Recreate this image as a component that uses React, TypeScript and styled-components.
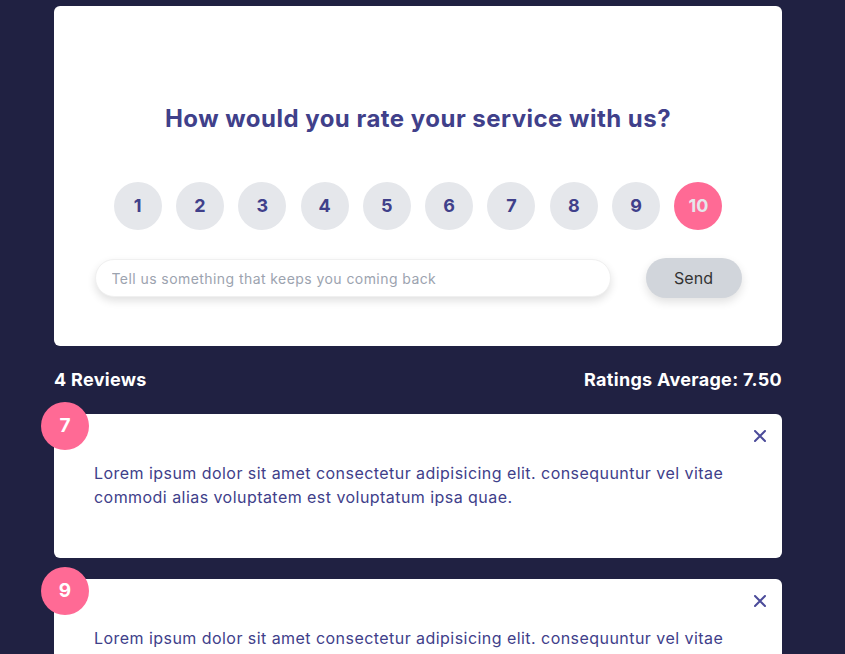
import styled, { createGlobalStyle } from "styled-components";
import { useState } from "react";

const GlobalStyle = createGlobalStyle`
  * {
    box-sizing: border-box;
    margin: 0;
    padding: 0;
  }
  body {
    background-color: #202142;
    font-family: "Inter", "Noto Sans", sans-serif;
    line-height: 1.6;
    padding-right: 9px;
  }
`;

const Container = styled.div`
  max-width: 768px;
  margin: 0 auto;
  padding: 6px 20px 40px;
`;

const Card = styled.div`
  position: relative;
  background-color: #ffffff;
  color: #40408a;
  border-radius: 6px;
  padding: 47px 40px 49px;
`;

const FormCard = styled(Card)`
  height: 340px;
  padding: 92px 40px 0;
`;

const Title = styled.h2`
  font-size: 24px;
  font-weight: 700;
  text-align: center;
  color: #40408a;
  line-height: 42px;
  letter-spacing: 0.48px;
`;

const RatingList = styled.ul`
  list-style: none;
  display: flex;
  justify-content: center;
  gap: 14.3px;
  margin: 42px 0 28px;
`;

const RatingItem = styled.li<{ $selected: boolean }>`
  width: 48px;
  height: 48px;
  border-radius: 50%;
  display: flex;
  align-items: center;
  justify-content: center;
  font-size: 18px;
  font-weight: 700;
  cursor: pointer;
  background-color: ${(props) => (props.$selected ? "#ff6a95" : "#e5e7eb")};
  color: ${(props) => (props.$selected ? "#e5e7eb" : "#40408a")};
`;

const InputRow = styled.form`
  display: flex;
  justify-content: center;
  align-items: center;
  gap: 35px;
`;

const Input = styled.input`
  width: 516px;
  height: 38px;
  border: 1px solid #f0f0f0;
  border-radius: 999px;
  padding: 0 16px;
  font-family: inherit;
  font-size: 14px;
  letter-spacing: 0.43px;
  color: #40408a;
  box-shadow: 0 4px 8px rgba(0, 0, 0, 0.12);
  outline: none;
  &::placeholder {
    color: #9ca3af;
  }
`;

const SendButton = styled.button`
  width: 96px;
  height: 40px;
  border: none;
  border-radius: 999px;
  background-color: #d1d5db;
  color: #333333;
  font-family: inherit;
  font-size: 16px;
  box-shadow: 0 4px 10px rgba(0, 0, 0, 0.12);
  cursor: pointer;
`;

const Stats = styled.div`
  display: flex;
  justify-content: space-between;
  align-items: center;
  color: #ffffff;
  font-weight: 700;
  font-size: 18px;
  letter-spacing: 0.3px;
  height: 68px;
`;

const ReviewList = styled.div`
  display: flex;
  flex-direction: column;
  gap: 21px;
`;

const NumDisplay = styled.div`
  position: absolute;
  top: -12px;
  left: -13px;
  width: 48px;
  height: 48px;
  border-radius: 50%;
  background-color: #ff6a95;
  color: #ffffff;
  display: flex;
  align-items: center;
  justify-content: center;
  font-size: 19px;
  font-weight: 700;
`;

const CloseButton = styled.button`
  position: absolute;
  top: 16px;
  right: 16px;
  width: 12px;
  height: 12px;
  background: none;
  border: none;
  cursor: pointer;
  display: flex;
`;

const ReviewText = styled.p`
  font-size: 16px;
  line-height: 24px;
  letter-spacing: 0.45px;
  color: #40408a;
`;

const lorem =
  "Lorem ipsum dolor sit amet consectetur adipisicing elit. consequuntur vel vitae commodi alias voluptatem est voluptatum ipsa quae.";

const reviews = [
  { id: 1, rating: 7, text: lorem },
  { id: 2, rating: 9, text: lorem },
  { id: 3, rating: 4, text: lorem },
  { id: 4, rating: 10, text: lorem },
];

function App() {
  const [selected, setSelected] = useState(10);
  const [items, setItems] = useState(reviews);

  const average =
    items.reduce((acc, cur) => acc + cur.rating, 0) / (items.length || 1);

  return (
    <>
      <GlobalStyle />
      <Container>
        <FormCard>
          <Title>How would you rate your service with us?</Title>
          <RatingList>
            {[1, 2, 3, 4, 5, 6, 7, 8, 9, 10].map((n) => (
              <RatingItem
                key={n}
                $selected={selected === n}
                onClick={() => setSelected(n)}
              >
                {n}
              </RatingItem>
            ))}
          </RatingList>
          <InputRow onSubmit={(e) => e.preventDefault()}>
            <Input placeholder="Tell us something that keeps you coming back" />
            <SendButton type="submit">Send</SendButton>
          </InputRow>
        </FormCard>
        <Stats>
          <span>{items.length} Reviews</span>
          <span>Ratings Average: {average.toFixed(2)}</span>
        </Stats>
        <ReviewList>
          {items.map((item) => (
            <Card key={item.id}>
              <NumDisplay>{item.rating}</NumDisplay>
              <CloseButton
                onClick={() => setItems(items.filter((i) => i.id !== item.id))}
              >
                <svg width="12" height="12" viewBox="0 0 12 12">
                  <path
                    d="M1 1L11 11M11 1L1 11"
                    stroke="#4b4b9a"
                    strokeWidth="2"
                    strokeLinecap="round"
                  />
                </svg>
              </CloseButton>
              <ReviewText>{item.text}</ReviewText>
            </Card>
          ))}
        </ReviewList>
      </Container>
    </>
  );
}

export default App;
